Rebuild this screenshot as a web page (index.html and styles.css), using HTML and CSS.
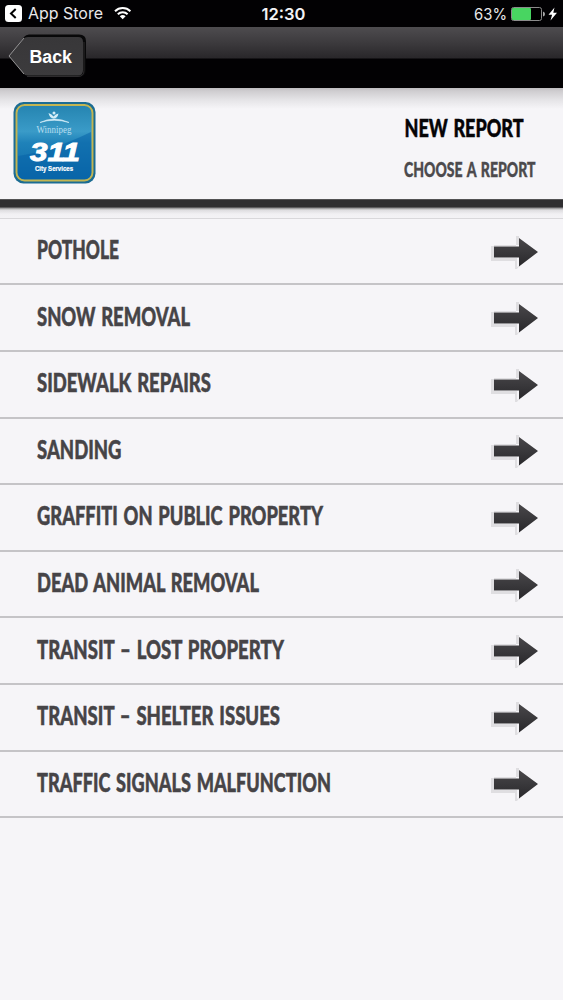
FILE: index.html
```html
<!DOCTYPE html>
<html lang="en">
<head>
<meta charset="utf-8">
<title>New Report</title>
<link rel="stylesheet" href="styles.css">
</head>
<body>
<svg class="defs" width="0" height="0" aria-hidden="true">
  <defs>
    <linearGradient id="ink" x1="0" y1="0" x2="0" y2="1"><stop offset="0" stop-color="#49474a"/><stop offset=".5" stop-color="#39383b"/><stop offset="1" stop-color="#29282b"/></linearGradient>
    <symbol id="arrow" viewBox="0 0 52 34">
      <path d="M5 11H30V1H33V10H8V23H31V32L34 30 31 34H29V26H5Z" fill="#dfdee1"/>
      <path d="M8 11.500H33V3L52 17 33 31.500V22.500H8Z" fill="url(#ink)"/>
    </symbol>
  </defs>
</svg>
<div class="status">
  <div class="status-left">
    <svg width="132" height="27" viewBox="0 0 132 27">
      <rect x="5" y="5" width="17" height="17" rx="3.5" fill="#fff"/>
      <path d="M15.7 9 11 13.5 15.7 18" fill="none" stroke="#000" stroke-width="2"/>
      <text x="28" y="19" class="status-text" textLength="75" lengthAdjust="spacingAndGlyphs">App Store</text>
      <g fill="none" stroke="#fff" stroke-width="2"><path d="M115 11.2a11 11 0 0 1 15.4 0"/><path d="M117.8 14.2a7 7 0 0 1 9.8 0"/></g>
      <path d="M119.8 16.3a4.2 4.2 0 0 1 5.8 0L122.7 19.2Z" fill="#fff"/>
    </svg>
  </div>
  <svg width="50" height="27" viewBox="0 0 50 27"><text x="4.5" y="19.8" class="status-time" textLength="44" lengthAdjust="spacingAndGlyphs">12:30</text></svg>
  <div class="status-right">
    <svg width="93" height="27" viewBox="0 0 93 27">
      <text x="4" y="19.7" class="status-text" textLength="33" lengthAdjust="spacingAndGlyphs">63%</text>
      <rect x="41.5" y="7.5" width="30" height="13" rx="2" fill="#000" stroke="#8b8b8b"/>
      <rect x="42" y="8" width="19" height="12" rx="1" fill="#48d561"/>
      <path d="M73 11.5q2 .5 2 2.5t-2 2.5Z" fill="#aaa"/>
      <path d="M84.5 7.500 78.500 14.700h3.6L80.5 20.500 87 12.700h-3.7Z" fill="#fff"/>
    </svg>
  </div>
</div>
<div class="toolbar">
  <svg width="82" height="50" viewBox="0 0 82 50">
    <defs><linearGradient id="key" x1="0" y1="0" x2="0" y2="1"><stop offset="0" stop-color="#383739"/><stop offset="1" stop-color="#3c3b3d"/></linearGradient></defs>
    <path d="M3 28 17 9Q19 6.5 22 6.5H72Q79 6.5 79 13V42Q79 49 72 49H22Q19 49 17 46Z" fill="#080809"/>
    <path d="M2 28 16 11Q18 9 21 9H71Q76 9 76 14V42Q76 47.5 71 47.5H21Q18 47.5 16 45Z" fill="url(#key)"/>
    <path d="M17 10 2 28 17 46" fill="none" stroke="#969596" stroke-width="1"/>
    <path d="M20 48.5H71q6 0 6-6V14" fill="none" stroke="#3d3b3e" stroke-width=".7"/>
    <text x="22.5" y="35" class="back-text" textLength="42.5" lengthAdjust="spacingAndGlyphs">Back</text>
  </svg>
</div>
<header class="header">
  <svg class="logo" width="84" height="84" viewBox="0 0 84 84">
    <defs>
      <linearGradient id="sky" x1="0" y1="0" x2="0" y2="1"><stop offset="0" stop-color="#2584b0"/><stop offset=".35" stop-color="#3a9bc8"/><stop offset=".5" stop-color="#1f82b9"/><stop offset="1" stop-color="#0a67a9"/></linearGradient>
    </defs>
    <rect x="1.500" y="1" width="82" height="81.500" rx="10" fill="#1b6c93"/>
    <rect x="4.500" y="4" width="76" height="75.500" rx="8" fill="url(#sky)" stroke="#c3b552" stroke-width="1.9"/>
    <path d="M6 55Q40 50 79 31V71Q79 78 72 78H13Q6 78 6 71Z" fill="#0763a7" opacity=".55"/>
    <path d="M28 21.5Q42 14.5 57 21.5 42 17 28 21.5Z" fill="#dff3fb" stroke="#dff3fb" stroke-width=".6"/>
    <path d="M36.5 12q3.500 1 5 3.500 2-2.500 5-3-1 5-5 5-4-.5-5-5.500Z" fill="#d4edf7"/>
    <circle cx="42" cy="12" r="1.500" fill="#d4edf7"/>
    <text x="24.500" y="31.500" class="logo-name" textLength="35" lengthAdjust="spacingAndGlyphs">Winnipeg</text>
    <text x="18" y="60" class="logo-number" textLength="50" lengthAdjust="spacingAndGlyphs">311</text>
    <text x="23" y="70" class="logo-tag" textLength="38" lengthAdjust="spacingAndGlyphs">City Services</text>
  </svg>
  <svg class="titles" width="140" height="80" viewBox="0 0 140 80">
    <text x="2.500" y="31" class="title" textLength="119" lengthAdjust="spacingAndGlyphs">NEW REPORT</text>
    <text x="2" y="71" class="subtitle" textLength="131.500" lengthAdjust="spacingAndGlyphs">CHOOSE A REPORT</text>
  </svg>
</header>
<div class="divider"></div>
<main class="list">
  <div class="row"><svg class="label" viewBox="0 0 320 40"><text x="0" y="28" textLength="82" lengthAdjust="spacingAndGlyphs">POTHOLE</text></svg><svg class="arrow"><use href="#arrow"/></svg></div>
  <div class="row"><svg class="label" viewBox="0 0 320 40"><text x="0" y="28" textLength="153" lengthAdjust="spacingAndGlyphs">SNOW REMOVAL</text></svg><svg class="arrow"><use href="#arrow"/></svg></div>
  <div class="row"><svg class="label" viewBox="0 0 320 40"><text x="0" y="28" textLength="174" lengthAdjust="spacingAndGlyphs">SIDEWALK REPAIRS</text></svg><svg class="arrow"><use href="#arrow"/></svg></div>
  <div class="row"><svg class="label" viewBox="0 0 320 40"><text x="0" y="28" textLength="84.500" lengthAdjust="spacingAndGlyphs">SANDING</text></svg><svg class="arrow"><use href="#arrow"/></svg></div>
  <div class="row"><svg class="label" viewBox="0 0 320 40"><text x="0" y="28" textLength="286" lengthAdjust="spacingAndGlyphs">GRAFFITI ON PUBLIC PROPERTY</text></svg><svg class="arrow"><use href="#arrow"/></svg></div>
  <div class="row"><svg class="label" viewBox="0 0 320 40"><text x="0" y="28" textLength="222" lengthAdjust="spacingAndGlyphs">DEAD ANIMAL REMOVAL</text></svg><svg class="arrow"><use href="#arrow"/></svg></div>
  <div class="row"><svg class="label" viewBox="0 0 320 40"><text x="0" y="28" textLength="247" lengthAdjust="spacingAndGlyphs">TRANSIT – LOST PROPERTY</text></svg><svg class="arrow"><use href="#arrow"/></svg></div>
  <div class="row"><svg class="label" viewBox="0 0 320 40"><text x="0" y="28" textLength="243" lengthAdjust="spacingAndGlyphs">TRANSIT – SHELTER ISSUES</text></svg><svg class="arrow"><use href="#arrow"/></svg></div>
  <div class="row"><svg class="label" viewBox="0 0 320 40"><text x="0" y="28" textLength="294" lengthAdjust="spacingAndGlyphs">TRAFFIC SIGNALS MALFUNCTION</text></svg><svg class="arrow"><use href="#arrow"/></svg></div>
</main>
</body>
</html>
```
FILE: styles.css
```css
* { box-sizing: border-box; }
body { margin: 0; height: 1000px; overflow: hidden; background: #f6f5f8; font-family: Lato, sans-serif; }
svg { display: block; flex: none; }
.status { display: flex; justify-content: space-between; height: 27px; background: #020103; }
.status-left, .status-right { flex: 1; display: flex; }
.status-right { justify-content: flex-end; }
.status-text { font: 400 16px Inter, sans-serif; fill: #e9e8ea; }
.status-time { font: 600 16.5px Inter, sans-serif; fill: #f3f2f4; }
.toolbar { height: 61px; padding: 1px 0 0 7px; background: linear-gradient(#4e4c4f 0, #3c3a3d 16px, #29272a 31px, #020103 32px); }
.back-text { font: 700 18px "Liberation Sans", sans-serif; fill: #fff; }
.header { display: flex; justify-content: space-between; height: 111px; padding: 13px 21px 0 12px; background: linear-gradient(#bebcbf 0, #cfcdd0 3px, #e5e4e7 12px, #f6f5f8 21px); }
.titles { margin-top: 5px; overflow: visible; }
.logo-name { font: 400 10.5px "Liberation Serif", serif; fill: #b8def0; }
.logo-number { font: italic 700 26px "Liberation Sans", sans-serif; fill: #fff; stroke: #fff; stroke-width: 0.9px; }
.logo-tag { font: 700 6.5px "Liberation Sans", sans-serif; fill: #fff; stroke: #fff; stroke-width: 0.2px; }
.title { font: 900 25px Lato, sans-serif; word-spacing: 2px; fill: #050406; stroke: #050406; stroke-width: 0.5px; }
.subtitle { font: 900 20.5px Lato, sans-serif; word-spacing: 2px; fill: #4c4a4d; stroke: #4c4a4d; stroke-width: 0.4px; }
.divider { height: 20px; background: linear-gradient(#777 0, #2f2e31 1px, #2f2e31 8px, #8c8b8e 9px, #dddcdf 11px, #f1f0f3 15px, #f3f2f5 19px, #d9d8db 19px); }
.row { display: flex; align-items: center; justify-content: space-between; height: 66.6px; padding: 0 25px 0 37px; border-bottom: 2px solid #c5c4c7; }
.row:first-child { height: 66.4px; }
.label { width: 320px; height: 40px; overflow: visible; font: 900 26px Lato, sans-serif; word-spacing: 2px; fill: #464447; stroke: #464447; stroke-width: 0.5px; }
.arrow { width: 52px; height: 34px; margin-top: 1px; }
```
